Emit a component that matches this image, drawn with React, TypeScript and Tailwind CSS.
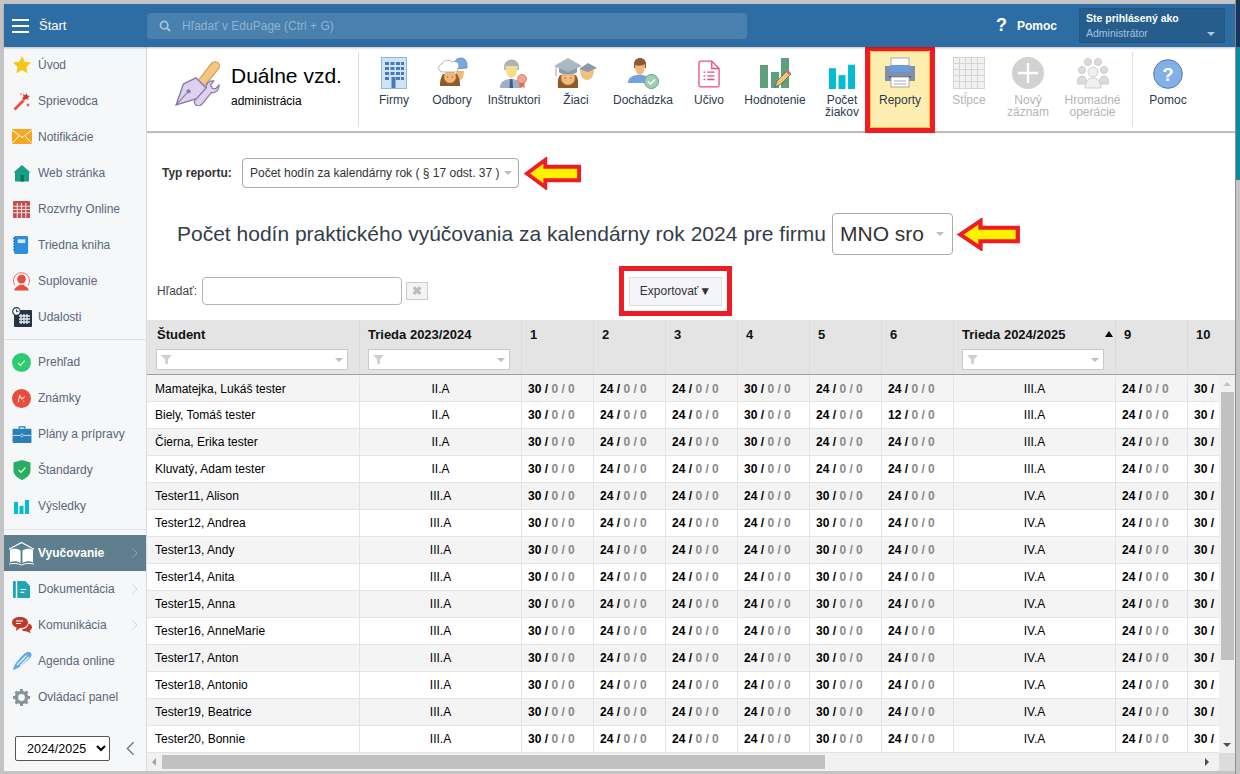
import { ReactNode } from "react";

const Star = () => (
  <svg viewBox="0 0 20 20" className="h-5 w-5"><path d="M10 1l2.700 5.800 6.300.8-4.600 4.300 1.200 6.300L10 15.100l-5.600 3.100 1.200-6.300L1 7.600l6.300-.8z" fill="#f5c518" /></svg>
);
const Wand = () => (
  <svg viewBox="0 0 20 20" className="h-5 w-5">
    <path d="M1.500 17.500l9-9 2 2-9 9z" fill="#e8503f" />
    <path d="M11 2l1 2 2-.5.500-1.500 1 2.500 2.500.5-2 1.500.5 2.500-2.300-1.200L12 9.500l-2-2 1.500-1.500z" fill="#d9342b" />
    <path d="M16 12l.7 1.500 1.500.5-1.500.6-.7 1.400-.6-1.400-1.400-.6 1.400-.5zM9 2l.4.800.8.3-.8.3L9 4.200l-.4-.8-.8-.3.8-.3z" fill="#d9342b" />
  </svg>
);
const Mail = () => (
  <svg viewBox="0 0 20 16" className="h-4 w-5">
    <rect width="20" height="15" fill="#f5a623" />
    <path d="M0 1l10 7.500L20 1M0 14.500l7-7.500M20 14.500l-7-7.500" stroke="#fff" strokeWidth="1" fill="none" />
  </svg>
);
const Home = () => (
  <svg viewBox="0 0 20 20" className="h-5 w-5">
    <path d="M10 2l8.500 7.500H17V18.500H3V9.500H1.500z" fill="#17a086" />
    <rect x="8.500" y="12" width="3.500" height="6.500" fill="#0e7461" />
  </svg>
);
const Timetable = () => (
  <svg viewBox="0 0 18 18" className="h-[17px] w-[17px]">
    <rect width="18" height="18" rx="1" fill="#c0504d" />
    <path d="M0 5.500h18M0 9h18M0 12.500h18M4.500 2v16M9 2v16M13.500 2v16" stroke="#f3d9d8" strokeWidth="1.200" />
  </svg>
);
const Notebook = () => (
  <svg viewBox="0 0 18 20" className="h-5 w-[17px]">
    <rect x="1" y="0.500" width="15" height="19" rx="1.500" fill="#2f8ddb" />
    <rect x="5" y="4" width="8" height="4" fill="#cfe6f8" />
    <path d="M0 3h2M0 6h2M0 9h2M0 12h2M0 15h2" stroke="#14609f" strokeWidth="1" />
  </svg>
);
const Person = () => (
  <svg viewBox="0 0 20 20" className="h-[19px] w-[19px]">
    <path d="M3 14a8.500 8.500 0 1 1 14 0" fill="none" stroke="#ef6b5b" strokeWidth="1" />
    <circle cx="10" cy="7.500" r="4.500" fill="#e94b3c" />
    <path d="M2.500 19.500c0-3.500 4-4 5.500-6h4c1.500 2 5.500 2.500 5.500 6z" fill="#e94b3c" />
  </svg>
);
const Calendar = () => (
  <svg viewBox="0 0 20 20" className="h-5 w-5">
    <rect x="2" y="3" width="18" height="17" rx="1" fill="#263546" />
    <path d="M7 9h11M7 12h11M7 15h11M9 7v10M12 7v10M15 7v10" stroke="#e8edf2" strokeWidth="1.300" />
    <circle cx="4.500" cy="4.500" r="3.800" fill="#fff" stroke="#263546" strokeWidth="1.200" />
    <path d="M4.500 2.500v2.200h2" stroke="#263546" strokeWidth="1" fill="none" />
  </svg>
);
const CheckCircle = () => (
  <svg viewBox="0 0 20 20" className="h-[19px] w-[19px]">
    <circle cx="10" cy="10" r="10" fill="#2ecc71" />
    <path d="M6.500 10.500l2.500 2.500 4.500-5" stroke="#e9fbf0" strokeWidth="1.200" fill="none" />
  </svg>
);
const Grades = () => (
  <svg viewBox="0 0 20 20" className="h-[19px] w-[19px]">
    <circle cx="10" cy="10" r="10" fill="#e74c3c" />
    <path d="M6.500 14l1.500-7 2.500 3.500 3-2.500M12 12.500l1 1" stroke="#f9d8d4" strokeWidth="1.200" fill="none" />
  </svg>
);
const Briefcase = () => (
  <svg viewBox="0 0 20 18" className="h-[17px] w-5">
    <path d="M7 3V1h6v2" stroke="#2980b9" strokeWidth="1.300" fill="none" />
    <rect y="3" width="20" height="15" rx="1" fill="#2980b9" />
    <path d="M0 10h8M12 10h8" stroke="#d4e6f3" strokeWidth="1" />
    <circle cx="10" cy="10" r="1.500" fill="none" stroke="#d4e6f3" strokeWidth="0.800" />
  </svg>
);
const Shield = () => (
  <svg viewBox="0 0 18 20" className="h-5 w-[18px]">
    <path d="M9 0l8.500 2.500V10c0 5-4 8-8.500 10C4.500 18 .5 15 .5 10V2.500z" fill="#27ae60" />
    <path d="M5.500 10l2.500 2.500 4.500-5" stroke="#e4f7ec" strokeWidth="1.200" fill="none" />
  </svg>
);
const Bars = ({ cls = "h-[15px] w-[15px]" }: { cls?: string }) => (
  <svg viewBox="0 0 15 15" className={cls}>
    <rect y="3" width="4" height="12" fill="#00bcd4" />
    <rect x="5.500" y="7" width="4" height="8" fill="#00bcd4" />
    <rect x="11" y="1" width="4" height="14" fill="#00bcd4" />
  </svg>
);
const OpenBook = () => (
  <svg viewBox="0 0 28 26" className="h-[25px] w-[27px]">
    <path d="M1 8.500L14 1.500 27 8.500" stroke="#fff" strokeWidth="1.200" fill="none" />
    <path d="M2 9c4-1.500 8-1 11 1v13c-3-2-7-2.500-11-1zM26 9c-4-1.500-8-1-11 1v13c3-2 7-2.500 11-1z" fill="#fff" />
    <path d="M1 24c4-1 9-1 13 1 4-2 9-2 13-1" stroke="#fff" strokeWidth="1" fill="none" />
  </svg>
);
const Doc = () => (
  <svg viewBox="0 0 18 18" className="h-[17px] w-[17px]">
    <rect width="3" height="18" rx="1" fill="#1fa5b5" />
    <path d="M4.500 0H13l5 5v13H4.500z" fill="#1fa5b5" />
    <path d="M8 9h6M8 12h4" stroke="#fff" strokeWidth="1.300" />
  </svg>
);
const Chat = () => (
  <svg viewBox="0 0 20 20" className="h-5 w-5">
    <path d="M8 2c4.500 0 8 2 8 5.500S12.500 13 8 13l-4 3 .5-3.500C2 11.500 0 10 0 7.500 0 4 3.500 2 8 2z" fill="#c0392b" />
    <path d="M16.500 8.500c2 .5 3.500 2 3.500 3.800 0 2-1.500 3-2.500 3.500l1.500 2.500-5-2c-2 0-3.500-.5-4.500-1.800 4-.5 7-3 7-6z" fill="#c0392b" />
    <path d="M4 6h7M4 8.500h5" stroke="#fff" strokeWidth="1" />
  </svg>
);
const Pen = () => (
  <svg viewBox="0 0 20 20" className="h-5 w-5">
    <path d="M1 19c1-5 3-8 11-16 2-2 5-2.500 6.500-1.500S20 5 18 7c-7 7-11 10-17 12z" fill="#5dade2" />
    <path d="M5 14L14.500 4.500M8 15L17 6" stroke="#f5f7f9" strokeWidth="1.200" />
  </svg>
);
const Gear = () => (
  <svg viewBox="0 0 20 20" className="h-[17px] w-[17px]">
    <circle cx="10" cy="10" r="6" fill="none" stroke="#87939a" strokeWidth="4" />
    <path d="M10 0v20M0 10h20M3 3l14 14M17 3L3 17" stroke="#87939a" strokeWidth="3.500" strokeDasharray="3.500 13 3.500" />
  </svg>
);

const sideA: [string, ReactNode][] = [
  ["Úvod", <Star />],
  ["Sprievodca", <Wand />],
  ["Notifikácie", <Mail />],
  ["Web stránka", <Home />],
  ["Rozvrhy Online", <Timetable />],
  ["Triedna kniha", <Notebook />],
  ["Suplovanie", <Person />],
  ["Udalosti", <Calendar />],
];
const sideB: [string, ReactNode][] = [
  ["Prehľad", <CheckCircle />],
  ["Známky", <Grades />],
  ["Plány a prípravy", <Briefcase />],
  ["Štandardy", <Shield />],
  ["Výsledky", <Bars />],
];
const sideC: [string, ReactNode, boolean][] = [
  ["Dokumentácia", <Doc />, true],
  ["Komunikácia", <Chat />, true],
  ["Agenda online", <Pen />, false],
  ["Ovládací panel", <Gear />, false],
];

const SideIcon = ({ children }: { children: ReactNode }) => (
  <span className="flex w-[21px] shrink-0 justify-center">{children}</span>
);

const Chevron = ({ light }: { light?: boolean }) => (
  <svg viewBox="0 0 6 10" className="h-[10px] w-[6px]">
    <path d="M.5.500L5 5 .5 9.500" fill="none" stroke={light ? "#8ea6b2" : "#d0d5da"} strokeWidth="1" />
  </svg>
);

const SideRow = ({ label, icon, arrow }: { label: string; icon: ReactNode; arrow?: boolean }) => (
  <div className="flex h-9 items-center gap-[6px] pl-[7px] pr-[8px] text-[12px] text-[#5b667a]">
    <SideIcon>{icon}</SideIcon>
    <span className="flex-1">{label}</span>
    {arrow && <Chevron />}
  </div>
);

const Sidebar = () => (
  <aside className="flex w-[143px] shrink-0 flex-col border-r border-[#d9dcdf] bg-[#f5f7f9]">
    <div>
      {sideA.map(([l, i]) => (
        <SideRow key={l} label={l} icon={i} />
      ))}
    </div>
    <div className="mb-[4px] mt-[4px] h-px bg-[#dfe2e5]" />
    <div>
      {sideB.map(([l, i]) => (
        <SideRow key={l} label={l} icon={i} />
      ))}
    </div>
    <div className="mb-[5px] mt-[5px] h-px bg-[#dfe2e5]" />
    <div className="flex h-9 items-center gap-[3px] bg-[#5f7f8f] pl-[4px] pr-[8px] text-[12px] font-bold text-white">
      <OpenBook />
      <span className="flex-1">Vyučovanie</span>
      <Chevron light />
    </div>
    {sideC.map(([l, i, a]) => (
      <SideRow key={l} label={l} icon={i} arrow={a} />
    ))}
    <div className="mt-[21px] flex items-center pl-[11px]">
      <select className="h-[25px] w-[95px] rounded-[2px] border border-[#555] bg-white pl-[7px] text-[12.500px] text-black">
        <option>2024/2025</option>
      </select>
      <svg viewBox="0 0 10 16" className="ml-[16px] h-[15px] w-[9px]">
        <path d="M8.500 1L1.500 8l7 7" fill="none" stroke="#6b7f8c" strokeWidth="1.600" />
      </svg>
    </div>
  </aside>
);

const TopBar = () => (
  <header className="relative z-10 flex h-[43px] shrink-0 items-center bg-[#2d6da3] text-white shadow-[0_1px_2px_rgba(0,0,0,0.25)]">
    <div className="ml-[8px] flex w-[17px] flex-col gap-[4px]">
      <span className="h-[2px] bg-white" />
      <span className="h-[2px] bg-white" />
      <span className="h-[2px] bg-white" />
    </div>
    <span className="ml-[10px] w-[108px] text-[13px]">Štart</span>
    <div className="flex h-[26px] w-[600px] items-center rounded-[4px] bg-[#4a80ad] pl-[12px] text-[12px] text-[#8fb3d1]">
      <svg viewBox="0 0 14 14" className="h-[12px] w-[12px]">
        <circle cx="6" cy="6" r="4.300" fill="none" stroke="#a9c6dd" strokeWidth="2" />
        <path d="M9 9l4 4" stroke="#a9c6dd" strokeWidth="2.200" />
      </svg>
      <span className="ml-[11px]">Hľadať v EduPage (Ctrl + G)</span>
    </div>
    <span className="ml-[249px] w-[18px] text-[18px] font-bold">?</span>
    <span className="ml-[3px] w-[62px] text-[12px] font-bold">Pomoc</span>
    <div className="relative h-[35px] w-[146px] rounded-[2px] border border-[#24567f] bg-[#255d8c] pl-[6px] pt-[2px] text-[10.500px] leading-[15px]">
      <div className="font-bold">Ste prihlásený ako</div>
      <div className="text-[#9fc4e4]">Administrátor</div>
      <span className="absolute bottom-[6px] right-[9px] h-0 w-0 border-x-[4px] border-t-[4px] border-x-transparent border-t-[#a9c6dd]" />
    </div>
  </header>
);

const PenWrench = () => (
  <svg viewBox="2 1 44 44" className="h-[46px] w-[46px] shrink-0">
    <path d="M24 21L37 4c2-2 5-1.500 6.500 0s1.500 4 0 5.500L30 26z" fill="#f5c77e" stroke="#c99c55" strokeWidth="1" />
    <path d="M22 18l11 11-7 8L3 44l7-20z" fill="#dcd2ee" stroke="#8a77ad" strokeWidth="1.300" />
    <circle cx="15" cy="31" r="2" fill="#8a77ad" />
    <path d="M3.500 43.500L14 32" stroke="#8a77ad" strokeWidth="1" />
    <path d="M22 44c-2-1.500-2-4 0-5.500l10-11c-.5-3 2-7 7-6.500l-3 4 1.500 3 3.500.5 3-3.500c.5 5-3.500 8-7 7L28 43c-1.500 2-4 2.500-6 1z" fill="#dcd2ee" stroke="#8a77ad" strokeWidth="1.200" />
  </svg>
);

const Face = ({ x, y, r = 6 }: { x: number; y: number; r?: number }) => (
  <>
    <circle cx={x} cy={y} r={r} fill="#f1b879" stroke="#c98e50" strokeWidth="0.500" />
    <circle cx={x - r / 2.500} cy={y} r="0.600" fill="#5c3d20" />
    <circle cx={x + r / 2.500} cy={y} r="0.600" fill="#5c3d20" />
  </>
);

const IconFirmy = () => (
  <svg viewBox="0 0 26 32" className="h-[32px] w-[26px]">
    <rect x="0.500" y="0.500" width="25" height="31" fill="#cfe3f6" stroke="#90b6dc" />
    <path d="M4 5h4v3H4zM9.500 5h4v3h-4zM15 5h4v3h-4zM20 5h3v3h-3zM4 10h4v3H4zM9.500 10h4v3h-4zM15 10h4v3h-4zM20 10h3v3h-3zM4 15h4v3H4zM9.500 15h4v3h-4zM15 15h4v3h-4zM20 15h3v3h-3zM4 20h4v3H4zM15 20h4v3h-4zM20 20h3v3h-3zM10.500 20h4v11h-4z" fill="#4a78b8" />
  </svg>
);
const IconOdbory = () => (
  <svg viewBox="0 0 32 32" className="h-[32px] w-[32px]">
    <path d="M17 12c0-8 4-11 8-11s6 3 6 8v2z" fill="#7ba9de" stroke="#4a78b8" strokeWidth="0.700" />
    <path d="M20 14h8c0 6-2 9-4 9s-4-3-4-9z" fill="#f1b879" />
    <path d="M7 17c-3 5-3 8-3 12h20c0-4 0-7-3-12z" fill="#8c5a2b" />
    <Face x={14} y={20} r={6} />
    <path d="M7 15c-5 0-6-7-1-8 1-4 7-5 10-2 4-2 9 2 6 6 0 2-1 4-2 4z" fill="#fff" stroke="#9a9a9a" strokeWidth="0.700" />
  </svg>
);
const IconInstr = () => (
  <svg viewBox="0 0 32 32" className="h-[32px] w-[32px]">
    <path d="M2 31c0-7 5-8 9-9h4c4 1 9 2 9 9z" fill="#9fb0c4" />
    <path d="M12 22h2.500l.5 9h-3.500z" fill="#3a5d8f" />
    <path d="M6 10c0-10 15-10 15 0v3H6z" fill="#a9b4bf" />
    <path d="M7.500 9h12c0 7-2.500 12-6 12s-6-5-6-12z" fill="#f6dc88" />
    <circle cx="24" cy="22" r="4.500" fill="#f0a392" stroke="#d9705c" strokeWidth="0.800" />
    <path d="M21.500 26v5l2.500-1.500 2.500 1.500v-5z" fill="#d9705c" />
  </svg>
);
const IconZiaci = () => (
  <svg viewBox="0 0 44 32" className="h-[32px] w-[44px]">
    <path d="M26 13c0 6 3 10 7 10s7-4 7-10z" fill="#f1c27f" />
    <path d="M25 12l9-6 9 5-9 4z" fill="#8a9aa8" />
    <path d="M6 18c-3 5-2 8-2 13h20c0-5 1-8-2-13z" fill="#8c5a2b" />
    <Face x={14} y={21} r={7} />
    <path d="M5 15c1 3 17 3 18 0v-5H5z" fill="#8a9aa8" />
    <path d="M0 9l14-8 14 8-14 6z" fill="#a9b8c4" />
    <path d="M2 10v9" stroke="#e88" strokeWidth="1" />
  </svg>
);
const IconDoch = () => (
  <svg viewBox="0 0 32 32" className="h-[32px] w-[32px]">
    <path d="M1 26c0-6 5-7 8-8h7c3 1 8 2 8 8z" fill="#72a3e0" />
    <path d="M7 7c0-8 12-8 12 0v4H7z" fill="#8c5a2b" />
    <path d="M8 8c2 1 8 1 10-1 0 7-2 11-5 11s-5-4-5-10z" fill="#f1b879" />
    <circle cx="24.500" cy="24.500" r="7" fill="#9ecfae" stroke="#6d9e8a" strokeWidth="1" />
    <path d="M21 24.500l2.500 2.500 4.500-4.500" fill="none" stroke="#fff" strokeWidth="1.500" />
  </svg>
);
const IconUcivo = () => (
  <svg viewBox="0 0 24 30" className="h-[30px] w-[22px]">
    <path d="M3 1h12l8 8v18a2 2 0 0 1-2 2H3a2 2 0 0 1-2-2V3a2 2 0 0 1 2-2zM15 1v8h8" fill="#fff" stroke="#ee4a7c" strokeWidth="1.400" />
    <path d="M6 13h2M10 13h8M6 17h2M10 17h8M6 21h2M10 21h8" stroke="#ee4a7c" strokeWidth="1.500" />
  </svg>
);
const IconHodn = () => (
  <svg viewBox="0 0 32 32" className="h-[32px] w-[32px]">
    <rect x="1" y="8" width="8" height="23" fill="#5f9f7d" />
    <rect x="12" y="15" width="8" height="16" fill="#5f9f7d" />
    <rect x="22" y="1" width="8" height="30" fill="#5f9f7d" />
    <path d="M16 30l2-6 10-10 4 3-10 10z" fill="#f2c66d" stroke="#555" strokeWidth="0.700" />
    <path d="M27 15l2-2 3 3-2 2z" fill="#e2667a" />
  </svg>
);
const IconPrinter = () => (
  <svg viewBox="0 0 32 32" className="h-[32px] w-[32px]">
    <rect x="7" y="1" width="18" height="9" fill="#fff" stroke="#9fa8b5" />
    <path d="M1 9h30v15H1z" fill="#7f90a8" />
    <rect x="6" y="8" width="20" height="7" fill="#6f9be0" />
    <rect x="5" y="19" width="22" height="2" fill="#4a5a70" />
    <rect x="7" y="20" width="18" height="10" fill="#fff" stroke="#9fa8b5" />
    <path d="M10 24h12M10 27h12" stroke="#9fa8b5" />
  </svg>
);
const IconStlpce = () => (
  <svg viewBox="0 0 32 32" className="h-[32px] w-[32px]">
    <rect x="0.500" y="0.500" width="31" height="31" fill="#f2f2f2" stroke="#d4d4d4" />
    <path d="M0 6.500h32M0 12.500h32M0 18.500h32M0 24.500h32M6.500 0v32M12.500 0v32M18.500 0v32M24.500 0v32" stroke="#d4d4d4" />
  </svg>
);
const IconNovy = () => (
  <svg viewBox="0 0 32 32" className="h-[32px] w-[32px]">
    <circle cx="16" cy="16" r="16" fill="#d2d2d2" />
    <path d="M16 6v20M6 16h20" stroke="#fff" strokeWidth="2.400" />
  </svg>
);
const IconHrom = () => (
  <svg viewBox="0 0 32 32" className="h-[32px] w-[32px]">
    <g fill="#dcdcdc" stroke="#c4c4c4" strokeWidth="0.800">
      <circle cx="11" cy="5" r="3.500" />
      <circle cx="21" cy="5" r="3.500" />
      <circle cx="5" cy="13" r="3.500" />
      <circle cx="27" cy="13" r="3.500" />
      <path d="M0 27c0-5 2-8 5-8s5 3 5 8zM22 27c0-5 2-8 5-8s5 3 5 8z" />
      <circle cx="16" cy="15" r="5" fill="#f0f0f0" />
      <path d="M8 31c0-6 3-10 8-10s8 4 8 10z" fill="#f0f0f0" />
    </g>
  </svg>
);
const IconHelp = () => (
  <svg viewBox="0 0 32 32" className="h-[30px] w-[30px]">
    <circle cx="16" cy="16" r="15.300" fill="#84b0e8" stroke="#4a78b8" strokeWidth="1" />
    <text x="16" y="23" textAnchor="middle" fontSize="20" fontWeight="700" fill="#fff" fontFamily="Liberation Sans">?</text>
  </svg>
);

type Tool = { w: string; label: string[]; icon: ReactNode; off?: boolean };
const toolsA: Tool[] = [
  { w: "w-[70px]", label: ["Firmy"], icon: <IconFirmy /> },
  { w: "w-[46px]", label: ["Odbory"], icon: <IconOdbory /> },
  { w: "w-[78px]", label: ["Inštruktori"], icon: <IconInstr /> },
  { w: "w-[46px]", label: ["Žiaci"], icon: <IconZiaci /> },
  { w: "w-[88px]", label: ["Dochádzka"], icon: <IconDoch /> },
  { w: "w-[44px]", label: ["Učivo"], icon: <IconUcivo /> },
  { w: "w-[88px]", label: ["Hodnotenie"], icon: <IconHodn /> },
  { w: "w-[46px]", label: ["Počet", "žiakov"], icon: <Bars cls="h-[26px] w-[26px]" /> },
];
const toolsB: Tool[] = [
  { w: "w-[68px]", label: ["Stĺpce"], icon: <IconStlpce />, off: true },
  { w: "w-[50px]", label: ["Nový", "záznam"], icon: <IconNovy />, off: true },
  { w: "w-[79px]", label: ["Hromadné", "operácie"], icon: <IconHrom />, off: true },
];

const ToolItem = ({ t }: { t: Tool }) => (
  <div className={`flex shrink-0 flex-col items-center ${t.w} pt-[10px] text-[12px] leading-[14px] ${t.off ? "text-[#b5b5b5]" : "text-[#2e3a4d]"}`}>
    <div className="flex h-[32px] items-end">{t.icon}</div>
    <div className="mt-[4px] whitespace-nowrap text-center">
      {t.label.map((x) => (
        <div key={x} className="-mb-[2px]">{x}</div>
      ))}
    </div>
  </div>
);

const Toolbar = () => (
  <div className="flex h-[84px] shrink-0 items-start bg-white shadow-[0_2px_1px_#bdbdbd]">
    <div className="mt-[5px] flex h-[75px] w-[212px] shrink-0 self-start border-r border-[#dedede] pl-[28px] pt-[8px]">
      <PenWrench />
      <div className="ml-[10px] pt-[3px]">
        <div className="text-[21px] leading-[26px] text-black">Duálne vzd.</div>
        <div className="mt-[5px] text-[12px] leading-[14px] text-black">administrácia</div>
      </div>
    </div>
    {toolsA.map((t) => (
      <ToolItem key={t.label[0]} t={t} />
    ))}
    <div className="-mt-[1px] h-[87px] w-[70px] shrink-0 border-[5px] border-[#ee1c25] bg-white">
      <div className="flex h-full flex-col items-center rounded-[2px] border border-[#f0c040] bg-[#fdeeb0] pt-[5px] text-[12px] leading-[12px] text-[#2e3a4d]">
        <IconPrinter />
        <div className="mt-[5px]">Reporty</div>
      </div>
    </div>
    {toolsB.map((t) => (
      <ToolItem key={t.label[0]} t={t} />
    ))}
    <div className="mt-[5px] h-[75px] w-px shrink-0 bg-[#dedede]" />
    <ToolItem t={{ w: "w-[70px]", label: ["Pomoc"], icon: <IconHelp /> }} />
  </div>
);

const YellowArrow = ({ cls }: { cls: string }) => (
  <svg viewBox="0 0 60 34" preserveAspectRatio="none" className={cls}>
    <path d="M3 17L22 3v7h35v14H22v7z" fill="#fff200" stroke="#ee1c25" strokeWidth="4" />
  </svg>
);

const Caret = () => (
  <span className="h-0 w-0 border-x-[4px] border-t-[4px] border-x-transparent border-t-[#bdbdbd]" />
);

const Funnel = () => (
  <svg viewBox="0 0 12 12" className="h-[11px] w-[11px]">
    <path d="M0 1h12L7.500 6v5.500L4.500 10V6z" fill="#cfcfcf" />
  </svg>
);

const FilterBox = ({ w }: { w: string }) => (
  <div className={`mt-[7px] flex h-[21px] items-center justify-between border border-[#c8c8c8] bg-white pl-[4px] pr-[4px] ${w}`}>
    <Funnel />
    <Caret />
  </div>
);

const numCols = ["1", "2", "3", "4", "5", "6"];

const TableHead = () => (
  <div className="flex h-[55px] shrink-0 overflow-hidden border-b border-[#98a2aa] bg-[#e4e4e4] text-[13px] font-bold leading-[15px] text-[#111]">
    <div className="w-[213px] shrink-0 border-r border-[#dadada] pl-[10px] pr-[11px] pt-[7px]">
      Študent
      <FilterBox w="w-[192px] -ml-px" />
    </div>
    <div className="w-[162px] shrink-0 border-r border-[#dadada] pl-[8px] pt-[7px]">
      Trieda 2023/2024
      <FilterBox w="w-[142px]" />
    </div>
    {numCols.map((n) => (
      <div key={n} className="w-[72px] shrink-0 border-r border-[#dadada] pl-[8px] pt-[7px]">{n}</div>
    ))}
    <div className="relative w-[162px] shrink-0 border-r border-[#dadada] pl-[8px] pt-[7px]">
      Trieda 2024/2025
      <span className="absolute right-[2px] top-[11px] h-0 w-0 border-x-[4px] border-b-[6px] border-x-transparent border-b-black" />
      <FilterBox w="w-[142px]" />
    </div>
    <div className="w-[72px] shrink-0 border-r border-[#dadada] pl-[8px] pt-[7px]">9</div>
    <div className="flex-1 pl-[8px] pt-[7px]">10</div>
  </div>
);

const first = [
  { name: "Mamatejka, Lukáš tester", a: "II.A", v: [30, 24, 24, 30, 24, 24], b: "III.A" },
  { name: "Biely, Tomáš tester", a: "II.A", v: [30, 24, 24, 30, 24, 12], b: "III.A" },
  { name: "Čierna, Erika tester", a: "II.A", v: [30, 24, 24, 30, 24, 24], b: "III.A" },
  { name: "Kluvatý, Adam tester", a: "II.A", v: [30, 24, 24, 30, 24, 24], b: "III.A" },
];
const testers = [
  "Tester11, Alison", "Tester12, Andrea", "Tester13, Andy", "Tester14, Anita", "Tester15, Anna",
  "Tester16, AnneMarie", "Tester17, Anton", "Tester18, Antonio", "Tester19, Beatrice", "Tester20, Bonnie",
];
const rows = [
  ...first,
  ...testers.map((name) => ({ name, a: "III.A", v: [30, 24, 24, 24, 30, 24], b: "IV.A" })),
];

const Hours = ({ n }: { n: number }) => (
  <div className="flex h-full w-[72px] shrink-0 items-center whitespace-pre border-r border-[#e4e4e4] pl-[6px] font-bold">
    <span className="text-black">{n} / </span>
    <span className="text-[#8a8a8a]">0 / 0</span>
  </div>
);

const TableBody = () => (
  <div className="flex min-h-0 flex-1">
    <div className="flex-1 overflow-hidden">
      {rows.map((r, i) => (
        <div
          key={r.name}
          className={`flex h-[27px] items-stretch border-b border-[#e4e4e4] text-[12px] text-black ${i === 0 ? "pt-[2px]" : ""} ${i % 2 === 0 ? "bg-[#f4f4f4]" : "bg-white"}`}
        >
          <div className="flex w-[213px] shrink-0 items-center border-r border-[#e4e4e4] pl-[8px]">{r.name}</div>
          <div className="flex w-[162px] shrink-0 items-center justify-center border-r border-[#e4e4e4]">{r.a}</div>
          {r.v.map((n, k) => (
            <Hours key={k} n={n} />
          ))}
          <div className="flex w-[162px] shrink-0 items-center justify-center border-r border-[#e4e4e4]">{r.b}</div>
          <Hours n={24} />
          <div className="flex shrink-0 items-center pl-[6px] font-bold">30 /</div>
        </div>
      ))}
    </div>
    <div className="flex w-[16px] shrink-0 flex-col items-center bg-[#f1f1f1] pt-[7px]">
      <span className="h-0 w-0 border-x-[4px] border-b-[4px] border-x-transparent border-b-[#c4c4c4]" />
      <div className="mt-[6px] h-[268px] w-[13px] bg-[#c1c1c1]" />
      <span className="mt-[83px] h-0 w-0 border-x-[4px] border-t-[4px] border-x-transparent border-t-[#505050]" />
    </div>
  </div>
);

const HScroll = () => (
  <div className="flex h-[18px] shrink-0 items-center bg-[#f1f1f1]">
    <span className="ml-[5px] h-0 w-0 border-y-[4px] border-r-[4px] border-y-transparent border-r-[#a3a3a3]" />
    <div className="ml-[6px] h-[14px] w-[663px] bg-[#c1c1c1]" />
    <span className="ml-[380px] h-0 w-0 border-y-[4px] border-l-[4px] border-y-transparent border-l-[#505050]" />
    <div className="ml-auto h-full w-[16px] bg-[#dcdcdc]" />
  </div>
);

const Content = () => (
  <main className="flex min-w-0 flex-1 flex-col bg-white">
    <Toolbar />
    <div className="mt-[27px] flex h-[30px] shrink-0 items-center pl-[15px]">
      <span className="w-[80px] text-[12px] font-bold text-[#333]">Typ reportu:</span>
      <div className="flex h-[30px] w-[277px] items-center justify-between rounded-[4px] border border-[#aaa] pl-[7px] pr-[6px] text-[12px] text-[#333]">
        <span className="whitespace-nowrap">Počet hodín za kalendárny rok ( § 17 odst. 37 )</span>
        <Caret />
      </div>
      <YellowArrow cls="ml-[5px] h-[33px] w-[58px]" />
    </div>
    <div className="mt-[25px] flex h-[42px] shrink-0 items-center pl-[30px]">
      <span className="w-[655px] whitespace-nowrap text-[21px] text-[#333d4a]">Počet hodín praktického vyúčovania za kalendárny rok 2024 pre firmu</span>
      <div className="flex h-[42px] w-[121px] items-center justify-between rounded-[4px] border border-[#aaa] pl-[7px] pr-[8px] text-[21px] text-[#333]">
        MNO sro
        <Caret />
      </div>
      <YellowArrow cls="ml-[4px] h-[33px] w-[64px]" />
    </div>
    <div className="mt-[11px] flex h-[50px] shrink-0 items-center pl-[10px]">
      <span className="w-[45px] text-[12px] text-[#444]">Hľadať:</span>
      <div className="h-[28px] w-[200px] rounded-[4px] border border-[#b5b5b5]" />
      <div className="ml-[4px] flex h-[18px] w-[22px] items-center justify-center border border-[#ccc] bg-[#f3f3f3] text-[12px] font-bold leading-none text-[#bbb]">✖</div>
      <div className="ml-[191px] flex h-[50px] w-[113px] items-center justify-center border-[5px] border-[#ee1c25] bg-white">
        <div className="flex h-[29px] w-[93px] items-center justify-center gap-[1px] border border-[#dcdfe4] bg-[#f4f5f9] text-[12px] text-[#333]">Exportovať<span>▼</span></div>
      </div>
    </div>
    <div className="mt-[4px] flex min-h-0 flex-1 flex-col">
      <TableHead />
      <TableBody />
      <HScroll />
    </div>
  </main>
);

export default function App() {
  return (
    <div className="flex h-[774px] w-[1240px] overflow-hidden bg-[#c4c4c4] font-['Liberation_Sans',Arial,sans-serif]">
      <div className="flex w-[1235px] shrink-0 flex-col pb-[3px] pl-[4px] pt-[4px]">
        <TopBar />
        <div className="flex min-h-0 flex-1">
          <Sidebar />
          <Content />
        </div>
      </div>
      <div className="flex w-[5px] shrink-0 flex-col border-l border-[#8f8f8f]">
        <div className="h-[47px] bg-[#14365f]" />
        <div className="h-[133px] bg-[#0f8aa0]" />
        <div className="flex-1 bg-[#c4c4c4]" />
      </div>
    </div>
  );
}
